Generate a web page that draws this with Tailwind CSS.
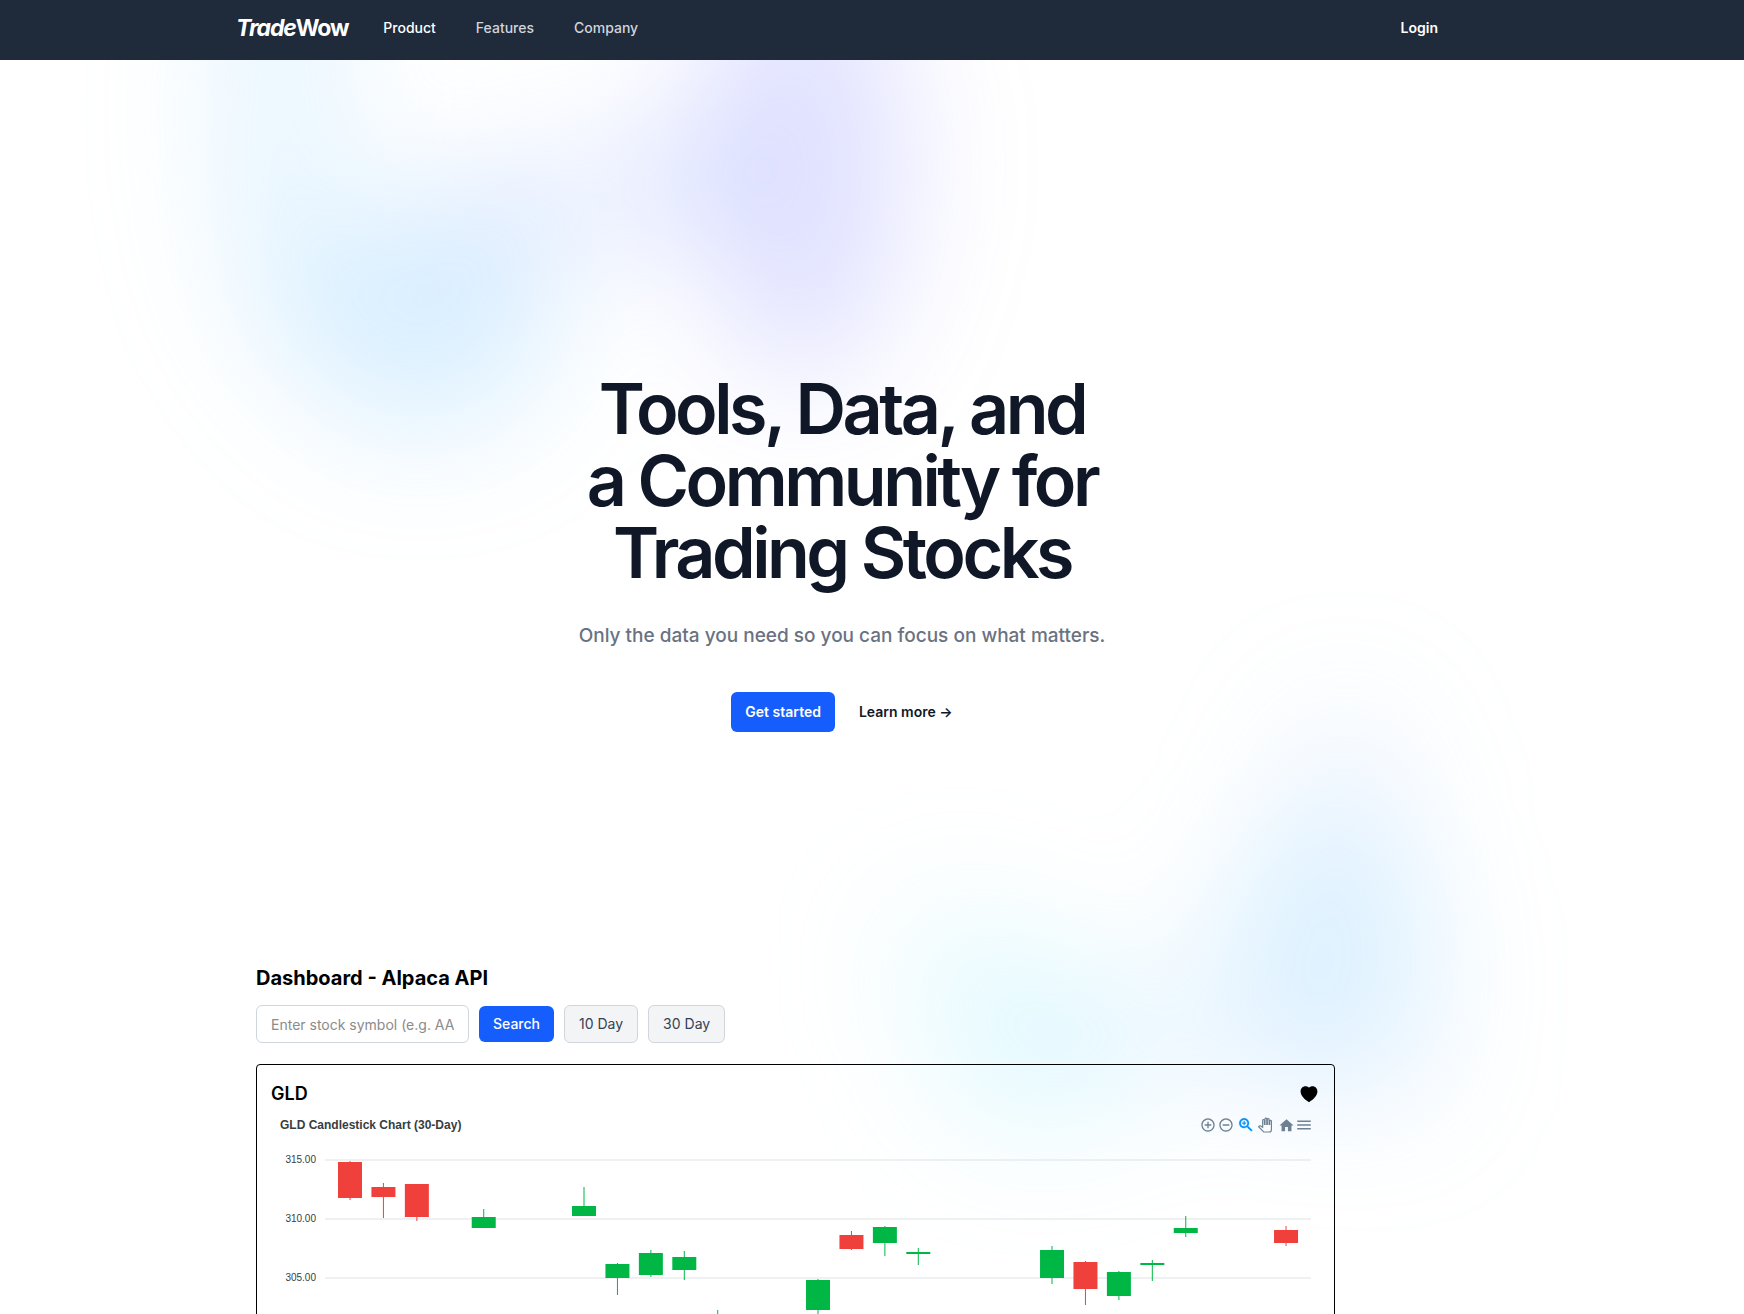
<!DOCTYPE html>
<html lang="en">
<head>
<meta charset="utf-8">
<title>TradeWow</title>
<script src="https://cdn.jsdelivr.net/npm/@tailwindcss/browser@4"></script>
</head>
<body class="bg-white font-['Inter',sans-serif] text-black">
<div class="relative flex h-screen flex-col overflow-hidden">
  <header class="relative z-10 shrink-0 bg-[#1f2a3a] pr-[60px]">
    <nav class="mx-auto flex h-[60px] max-w-[1212px] items-center pr-[10px] pb-1">
      <a href="#" class="mr-[35px] text-[23px] font-bold tracking-tighter text-white"><em>Trade</em>Wow</a>
      <div class="flex flex-1 gap-10 text-sm font-medium">
        <a href="#" class="text-white">Product</a>
        <a href="#" class="text-gray-300">Features</a>
        <a href="#" class="text-gray-300">Company</a>
      </div>
      <a href="#" class="text-sm font-semibold text-white">Login</a>
    </nav>
  </header>

  <!-- soft colour clouds behind the content -->
  <svg class="pointer-events-none absolute inset-x-0 top-0 h-[1314px] w-full" viewBox="0 0 1744 1314" preserveAspectRatio="xMidYMin slice" aria-hidden="true">
    <defs><filter id="soft" filterUnits="userSpaceOnUse" x="-200" y="-400" width="2200" height="2000" color-interpolation-filters="sRGB"><feGaussianBlur stdDeviation="62"/></filter></defs>
    <g filter="url(#soft)">
      <ellipse cx="280" cy="110" rx="65" ry="230" fill="#8fd0ff" fill-opacity=".22"/>
      <ellipse cx="420" cy="320" rx="135" ry="115" fill="#70c4ff" fill-opacity=".25"/>
      <path d="M440 230L760 160" stroke="#98b4ff" stroke-opacity=".24" stroke-width="100"/>
      <ellipse cx="802" cy="165" rx="105" ry="220" fill="#8084ff" fill-opacity=".24"/>
    </g>
    <g filter="url(#soft)">
      <ellipse cx="1325" cy="950" rx="115" ry="125" fill="#74c8ff" fill-opacity=".22"/>
      <ellipse cx="1345" cy="810" rx="60" ry="110" fill="#9cc8ff" fill-opacity=".18"/>
      <ellipse cx="1040" cy="1045" rx="110" ry="90" fill="#7ce8ff" fill-opacity=".2"/>
      <ellipse cx="960" cy="960" rx="80" ry="60" fill="#8eeaff" fill-opacity=".14"/>
      <path d="M1080 1020L1440 1070" stroke="#a0d0ff" stroke-opacity=".14" stroke-width="100"/>
    </g>
  </svg>

  <main class="relative pr-[60px]">
    <section class="mx-auto flex max-w-2xl flex-col items-center pt-[313px] text-center">
      <h1 class="text-[70px] leading-[72px] font-semibold tracking-tighter text-[#101828]">Tools, Data, and<br>a Community for<br>Trading Stocks</h1>
      <p class="mt-[31px] text-[19px] leading-8 font-medium text-[#6a7282]">Only the data you need so you can focus on what matters.</p>
      <div class="mt-10 flex items-center gap-6 text-sm font-semibold">
        <button type="button" class="h-10 rounded-md bg-[#155dfc] px-[14px] text-white">Get started</button>
        <a href="#" class="text-[#101828]">Learn more →</a>
      </div>
    </section>

    <section class="mx-auto mt-[232px] max-w-[1212px] pl-5">
      <h2 class="text-xl leading-7 font-bold">Dashboard - Alpaca API</h2>
      <form class="mt-[13px] flex items-center gap-[10px] text-sm">
        <input type="text" aria-label="Stock symbol" placeholder="Enter stock symbol (e.g. AAPL)" class="h-[38px] w-[213px] rounded-md border border-gray-300 bg-white px-[14px] placeholder:text-[#8b8b8b]">
        <button type="submit" class="h-9 rounded-md bg-[#155dfc] px-[14px] font-medium text-white">Search</button>
        <button type="button" class="h-[38px] rounded-md border border-gray-300 bg-gray-100 px-[14px] text-[#364153]">10 Day</button>
        <button type="button" class="h-[38px] rounded-md border border-gray-300 bg-gray-100 px-[14px] text-[#364153]">30 Day</button>
      </form>

      <article class="mt-[21px] max-w-[1079px] rounded-sm border border-black px-[14px] pt-[15px]">
        <div class="flex h-7 items-center justify-between">
          <h3 class="text-lg font-semibold">GLD</h3>
          <button type="button" aria-label="Favorite" class="mr-[2px]">
            <svg class="block h-[18px] w-[18px]" viewBox="0 0 24 24"><path d="M12 23C6 18.500 .8 14.500 .8 8.500 .8 4.500 3.700 1.600 7.200 1.600c2 0 3.800 .7 4.800 2 1-1.300 2.800-2 4.800-2 3.500 0 6.400 2.900 6.400 6.900 0 6-5.200 10-11.200 14.500z"/></svg>
          </button>
        </div>
        <div class="mt-[7px] flex h-5 items-center justify-between pr-[7px] pl-[9px]">
          <h4 class="font-['Liberation_Sans',sans-serif] text-xs font-bold text-[#373d3f]">GLD Candlestick Chart (30-Day)</h4>
          <div class="flex items-center text-[#6e8192]">
            <button type="button" aria-label="Zoom in" class="mr-[2px]"><svg class="block size-4" viewBox="0 0 24 24" fill="currentColor"><path d="M13 7h-2v4H7v2h4v4h2v-4h4v-2h-4V7zm-1-5C6.480 2 2 6.480 2 12s4.480 10 10 10 10-4.480 10-10S17.520 2 12 2zm0 18c-4.410 0-8-3.590-8-8s3.590-8 8-8 8 3.590 8 8-3.590 8-8 8z"/></svg></button>
            <button type="button" aria-label="Zoom out" class="mr-[3px]"><svg class="block size-4" viewBox="0 0 24 24" fill="currentColor"><path d="M7 11v2h10v-2H7zm5-9C6.480 2 2 6.480 2 12s4.480 10 10 10 10-4.480 10-10S17.520 2 12 2zm0 18c-4.410 0-8-3.590-8-8s3.590-8 8-8 8 3.590 8 8-3.590 8-8 8z"/></svg></button>
            <button type="button" aria-label="Selection zoom" class="mr-[3px] text-[#008ffb]"><svg class="block size-[18px]" viewBox="0 0 24 24" fill="currentColor" stroke="currentColor" stroke-width=".5"><path d="M15.500 14h-.79l-.28-.27C15.410 12.590 16 11.110 16 9.500 16 5.910 13.090 3 9.500 3S3 5.910 3 9.500 5.910 16 9.500 16c1.610 0 3.090-.59 4.230-1.570l.27.28v.79l5 4.990L20.490 19l-4.990-5zm-6 0C7.010 14 5 11.990 5 9.500S7.010 5 9.500 5 14 7.010 14 9.500 11.990 14 9.500 14z"/><path d="M12 10h-2v2H9v-2H7V9h2V7h1v2h2v1z"/></svg></button>
            <button type="button" aria-label="Pan" class="mr-[6px]"><svg class="block size-[14px] overflow-visible" viewBox="0 0 24 24" fill="#fefefe" stroke="currentColor" stroke-width="2"><path d="M23 5.500V20c0 2.200-1.800 4-4 4h-7.300c-1.080 0-2.100-.43-2.850-1.190L1 14.830s1.260-1.230 1.300-1.250c.22-.19.49-.29.79-.29.22 0 .42.06.6.16.04.01 4.310 2.460 4.310 2.460V4c0-.83.67-1.500 1.500-1.500S11 3.170 11 4v7h1V1.500c0-.83.67-1.500 1.500-1.500S15 .67 15 1.500V11h1V2.500c0-.83.67-1.500 1.500-1.500s1.500.67 1.500 1.500V11h1V5.500c0-.83.67-1.500 1.500-1.500s1.500.67 1.500 1.500z"/></svg></button>
            <button type="button" aria-label="Reset zoom"><svg class="block size-[17px]" viewBox="0 0 24 24" fill="currentColor"><path d="M10 20v-6h4v6h5v-8h3L12 3 2 12h3v8z"/></svg></button>
            <button type="button" aria-label="Menu"><svg class="block size-[18px]" viewBox="0 0 24 24" fill="currentColor"><path d="M3 18h18v-2H3v2zm0-5h18v-2H3v2zM3 6v2h18V6H3z"/></svg></button>
          </div>
        </div>
        <svg id="chart" class="mt-[14px] block w-full" viewBox="0 0 1049 320" role="img" aria-label="GLD candlestick chart"></svg>
      </article>
    </section>
  </main>
</div>
<script>
  const up = '#00b746', down = '#ef403c';
  // slot, high, body top, body bottom, low, colour
  const candles = [
    [0, 12, 13, 49, 51, down], [1, 34, 38, 48, 69, down], [2, 35, 35, 68, 72, down],
    [4, 60, 68, 79, 79, up], [7, 38, 57, 67, 67, up], [8, 114, 115, 129, 146, up],
    [9, 101, 104, 126, 128, up], [10, 102, 108, 121, 131, up], [11, 161, 172, 190, 200, up],
    [14, 130, 131, 161, 170, up], [15, 82, 86, 100, 101, down], [16, 77, 78, 94, 107, up],
    [17, 99, 103, 105, 116, up], [21, 97, 101, 129, 135, up], [22, 112, 113, 140, 156, down],
    [23, 122, 123, 147, 151, up], [24, 111, 114, 116, 132, up], [25, 67, 79, 84, 88, up],
    [28, 77, 81, 94, 97, down]
  ];
  let out = '';
  ['315.00', '310.00', '305.00'].forEach((t, i) => {
    const y = 11 + i * 59;
    out += `<path d="M54 ${y}H1040" stroke="#e9ebec" stroke-width="1.5"/>` +
      `<text x="45" y="${y + 3}" text-anchor="end" font-size="10" fill="#373d3f" font-family="Liberation Sans, sans-serif">${t}</text>`;
  });
  candles.forEach(([s, hi, top, bot, lo, c]) => {
    const x = 79 + s * 33.43;
    out += `<path d="M${x} ${hi}V${lo}" stroke="${c}"/>` +
      `<rect x="${x - 12}" y="${top}" width="24" height="${bot - top}" fill="${c}"/>`;
  });
  document.getElementById('chart').innerHTML = out;
</script>
</body>
</html>
